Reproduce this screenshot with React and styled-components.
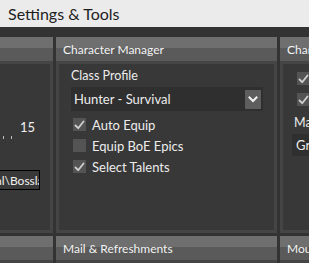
import React from 'react';
import styled, { createGlobalStyle } from 'styled-components';

const Global = createGlobalStyle`
  html, body {
    margin: 0;
    padding: 0;
    background: #333333;
    overflow: hidden;
  }
  body {
    font-family: Lato, "Noto Sans", sans-serif;
  }
`;

function Check() {
  return (
    <svg width="11" height="10" viewBox="0 0 11 10">
      <path d="M1.5 5.5 L4.2 8.2 L9.5 1.5" fill="none" stroke="#d0d0d0" strokeWidth="1.8" strokeLinecap="round" strokeLinejoin="round" />
    </svg>
  );
}

function Chevron() {
  return (
    <svg width="10" height="7" viewBox="0 0 10 7">
      <path d="M1.5 1.5 L5 5 L8.5 1.5" fill="none" stroke="#f2f2f2" strokeWidth="2" strokeLinecap="square" />
    </svg>
  );
}

function CheckRow({ checked, children }) {
  return (
    <Row>
      <Box>{checked && <Check />}</Box>
      <RowText>{children}</RowText>
    </Row>
  );
}

export default function App() {
  return (
    <>
      <Global />
      <Window>
        <TitleBar>Settings &amp; Tools</TitleBar>
        <Content>
          <Grid>
            <Panel>
              <Header />
              <Body $align="flex-end">
                <Value>15</Value>
                <Ticks>
                  <Tick />
                  <Tick />
                </Ticks>
                <PathBox>
                  <PathText>Honorbuddy\Local\Bossland</PathText>
                </PathBox>
              </Body>
            </Panel>

            <Panel>
              <Header>Character Manager</Header>
              <Body>
                <Label>Class Profile</Label>
                <Select>
                  <span>Hunter - Survival</span>
                  <SelectButton><Chevron /></SelectButton>
                </Select>
                <Checks>
                  <CheckRow checked>Auto Equip</CheckRow>
                  <CheckRow>Equip BoE Epics</CheckRow>
                  <CheckRow checked>Select Talents</CheckRow>
                </Checks>
              </Body>
            </Panel>

            <Panel>
              <Header>Character Settings</Header>
              <Body>
                <SideChecks>
                  <CheckRow checked>Loot Mobs</CheckRow>
                  <CheckRow checked>Skin Mobs</CheckRow>
                </SideChecks>
                <SideLabel>Max Bags</SideLabel>
                <SideSelect>Grey</SideSelect>
              </Body>
            </Panel>

            <Panel>
              <Header />
              <Body $short />
            </Panel>
            <Panel>
              <Header>Mail &amp; Refreshments</Header>
              <Body $short />
            </Panel>
            <Panel>
              <Header>Mounts</Header>
              <Body $short />
            </Panel>
          </Grid>
        </Content>
      </Window>
    </>
  );
}

const Window = styled.div`
  width: 309px;
  height: 263px;
  overflow: hidden;
  display: flex;
  flex-direction: column;
`;

const TitleBar = styled.div`
  height: 27px;
  flex: none;
  background: #ebebeb;
  color: #1e1e1e;
  font-size: 16px;
  line-height: 27px;
  padding-left: 8px;
`;

const Content = styled.div`
  flex: 1;
  background: #333333;
  padding-top: 10px;
  overflow: hidden;
`;

const Grid = styled.div`
  display: grid;
  grid-template-columns: 160px 221px 200px;
  column-gap: 3px;
  row-gap: 3px;
  margin-left: -107px;
`;

const Panel = styled.div`
  display: flex;
  flex-direction: column;
  min-width: 0;
`;

const Header = styled.div`
  height: 24px;
  background: linear-gradient(#6f6f6f 0 11px, #5a5a5a 11px 100%);
  color: #f4f4f4;
  font-size: 12px;
  line-height: 25px;
  padding-left: 7px;
  white-space: nowrap;
  overflow: hidden;
`;

const Body = styled.div`
  height: ${p => (p.$short ? '40px' : '172px')};
  box-sizing: border-box;
  border: 3px solid #454545;
  background: #383838;
  display: flex;
  flex-direction: column;
  align-items: ${p => p.$align || 'flex-start'};
  padding-top: 4px;
  overflow: hidden;
`;

const Label = styled.div`
  color: #ececec;
  font-size: 12.5px;
  line-height: 16px;
  margin-left: 12px;
`;

const Select = styled.div`
  margin: 3px 0 0 12px;
  width: 192px;
  height: 24px;
  box-sizing: border-box;
  background: #2f2f2f;
  color: #ececec;
  font-size: 13px;
  display: flex;
  align-items: center;
  justify-content: space-between;
  padding: 0 2px 0 3px;
`;

const SelectButton = styled.div`
  width: 16px;
  height: 19px;
  margin-top: 1px;
  background: #5e5e5e;
  display: flex;
  align-items: center;
  justify-content: center;
`;

const Checks = styled.div`
  margin: 3px 0 0 14px;
  display: flex;
  flex-direction: column;
`;

const Row = styled.div`
  height: 21px;
  display: flex;
  align-items: center;
  gap: 6px;
  white-space: nowrap;
`;

const Box = styled.div`
  width: 13px;
  height: 13px;
  flex: none;
  background: #545454;
  display: flex;
  align-items: center;
  justify-content: center;
`;

const RowText = styled.span`
  color: #ececec;
  font-size: 13px;
`;

const SideChecks = styled(Checks)`
  margin: 0 0 0 14px;
`;

const SideLabel = styled(Label)`
  margin: 5px 0 0 11px;
`;

const SideSelect = styled.div`
  margin: 3px 0 0 9px;
  width: 150px;
  height: 22px;
  background: #2f2f2f;
  color: #ececec;
  font-size: 13px;
  line-height: 22px;
  padding-left: 4px;
`;

const Value = styled.div`
  color: #f0f0f0;
  font-size: 13px;
  line-height: 16px;
  margin: 51px 15px 0 0;
`;

const Ticks = styled.div`
  display: flex;
  gap: 7px;
  margin: 1px 38px 0 0;
`;

const Tick = styled.div`
  width: 1px;
  height: 3px;
  background: #bdbdbd;
`;

const PathBox = styled.div`
  margin: 31px 10px 0 0;
  width: 134px;
  height: 20px;
  box-sizing: border-box;
  border: 1px solid #000;
  background: #383838;
  overflow: hidden;
  display: flex;
  align-items: center;
  justify-content: flex-end;
`;

const PathText = styled.span`
  color: #f0f0f0;
  font-size: 12px;
  white-space: nowrap;
  margin-right: -18px;
`;
